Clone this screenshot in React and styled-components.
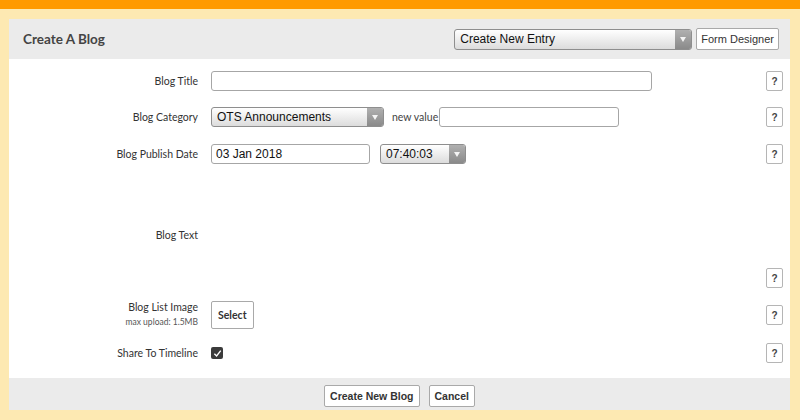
import React from "react";
import styled, { createGlobalStyle } from "styled-components";

const Global = createGlobalStyle`
  html, body { margin: 0; padding: 0; }
  body { background: #fde9b2; font-family: Lato, "Open Sans", sans-serif; }
  * { box-sizing: border-box; }
`;

const Page = styled.div`
  width: 800px;
  height: 420px;
  background: #fde9b2;
  display: flex;
  flex-direction: column;
  overflow: hidden;
`;

const TopBar = styled.div`
  height: 9px;
  background: #ff9a00;
  flex: none;
`;

const Panel = styled.div`
  margin: 10px 10px 0 9px;
  width: 781px;
  display: flex;
  flex-direction: column;
`;

const Header = styled.div`
  height: 40px;
  background: #ebebeb;
  display: flex;
  align-items: center;
  padding: 0 11px 0 14px;
`;

const Title = styled.div`
  flex: 1;
  font-weight: 700;
  font-size: 13.5px;
  color: #444;
`;

const SelectBox = styled.div`
  width: ${(p) => p.w}px;
  height: ${(p) => p.h || 20}px;
  border: 1px solid #8e8e8e;
  border-radius: 3px;
  background: linear-gradient(#ffffff, #dcdcdc);
  display: flex;
  align-items: center;
  font-family: "Liberation Sans", Arial, sans-serif;
  font-size: 12px;
  color: #111;
  overflow: hidden;
  margin-left: ${(p) => p.ml || 0}px;
`;

const SelectText = styled.span`
  flex: 1;
  padding-left: 5px;
`;

const Arrow = styled.span`
  width: 16px;
  align-self: stretch;
  background: linear-gradient(#b0b0b0, #8a8a8a);
  display: flex;
  align-items: center;
  justify-content: center;
  &::after {
    content: "";
    border-left: 3.5px solid transparent;
    border-right: 3.5px solid transparent;
    border-top: 5px solid #f4f4f4;
  }
`;

const Button = styled.button`
  height: ${(p) => p.h || 21}px;
  padding: 0 ${(p) => p.px || 6}px;
  border: 1px solid #a9a9a9;
  border-radius: 2px;
  background: #fff;
  font-family: ${(p) => (p.lato ? "Lato, sans-serif" : '"Liberation Sans", Arial, sans-serif')};
  font-weight: ${(p) => (p.bold ? 700 : 400)};
  font-size: ${(p) => p.fs || 11}px;
  color: #333;
  margin-left: ${(p) => p.ml || 0}px;
  cursor: pointer;
`;

const Body = styled.div`
  background: #fff;
  height: 319px;
  display: flex;
  flex-direction: column;
  padding-top: 12px;
`;

const Row = styled.div`
  display: grid;
  grid-template-columns: 189px 1fr 24px;
  column-gap: 13px;
  align-items: ${(p) => p.align || "center"};
  height: ${(p) => p.h}px;
  margin-bottom: ${(p) => p.mb || 0}px;
`;

const Label = styled.div`
  text-align: right;
  font-size: 10.5px;
  color: #333;
  line-height: 13px;
`;

const SubLabel = styled.div`
  font-size: 8.5px;
  color: #555;
  margin-top: 2px;
`;

const Fields = styled.div`
  display: flex;
  align-items: center;
`;

const Input = styled.div`
  width: ${(p) => p.w}px;
  height: ${(p) => p.h || 20}px;
  border: 1px solid #a6a6a6;
  border-radius: 3px;
  background: #fff;
  font-family: "Liberation Sans", Arial, sans-serif;
  font-size: 12px;
  color: #111;
  padding-left: 4px;
  display: flex;
  align-items: center;
  margin-left: ${(p) => p.ml || 0}px;
`;

const SmallText = styled.span`
  font-size: 10.5px;
  color: #444;
  margin-left: 8px;
  margin-right: 1px;
`;

const Help = styled.div`
  width: 17px;
  height: 20px;
  border: 1px solid #b5b5b5;
  border-radius: 2px;
  font-family: "Liberation Sans", Arial, sans-serif;
  font-size: 10px;
  font-weight: 700;
  color: #444;
  display: flex;
  align-items: center;
  justify-content: center;
  align-self: ${(p) => p.self || "auto"};
`;

const Check = styled.div`
  width: 12px;
  height: 12px;
  border-radius: 2px;
  background: #3b3b3b;
  display: flex;
  align-items: center;
  justify-content: center;
`;

const Footer = styled.div`
  height: 32px;
  background: #ebebeb;
  display: flex;
  align-items: center;
  justify-content: center;
  gap: 9px;
  padding-top: 4px;
`;

export default function App() {
  return (
    <Page>
      <Global />
      <TopBar />
      <Panel>
        <Header>
          <Title>Create A Blog</Title>
          <SelectBox w={238} h={21}>
            <SelectText>Create New Entry</SelectText>
            <Arrow />
          </SelectBox>
          <Button ml={4} h={22} px={4}>Form Designer</Button>
        </Header>
        <Body>
          <Row h={20} mb={16}>
            <Label>Blog Title</Label>
            <Fields><Input w={441} /></Fields>
            <Help>?</Help>
          </Row>
          <Row h={20} mb={17}>
            <Label>Blog Category</Label>
            <Fields>
              <SelectBox w={173}>
                <SelectText>OTS Announcements</SelectText>
                <Arrow />
              </SelectBox>
              <SmallText>new value</SmallText>
              <Input w={180} />
            </Fields>
            <Help>?</Help>
          </Row>
          <Row h={20} mb={0}>
            <Label>Blog Publish Date</Label>
            <Fields>
              <Input w={159}>03 Jan 2018</Input>
              <SelectBox w={86} ml={10}>
                <SelectText>07:40:03</SelectText>
                <Arrow />
              </SelectBox>
            </Fields>
            <Help>?</Help>
          </Row>
          <Row h={124} mb={13} align="stretch">
            <Label style={{ alignSelf: "center", marginTop: 18 }}>Blog Text</Label>
            <div />
            <Help self="end">?</Help>
          </Row>
          <Row h={28} mb={14}>
            <Label>
              Blog List Image
              <SubLabel>max upload: 1.5MB</SubLabel>
            </Label>
            <Fields>
              <Button bold lato fs={10.5} h={28} px={6}>Select</Button>
            </Fields>
            <Help>?</Help>
          </Row>
          <Row h={20}>
            <Label>Share To Timeline</Label>
            <Fields>
              <Check>
                <svg width="9" height="9" viewBox="0 0 10 10">
                  <path d="M1.5 5.2 L4 7.8 L8.6 1.8" fill="none" stroke="#fff" strokeWidth="1.5" />
                </svg>
              </Check>
            </Fields>
            <Help>?</Help>
          </Row>
        </Body>
        <Footer>
          <Button bold fs={10.5} h={22} px={5}>Create New Blog</Button>
          <Button bold fs={10.5} h={22} px={5}>Cancel</Button>
        </Footer>
      </Panel>
    </Page>
  );
}
